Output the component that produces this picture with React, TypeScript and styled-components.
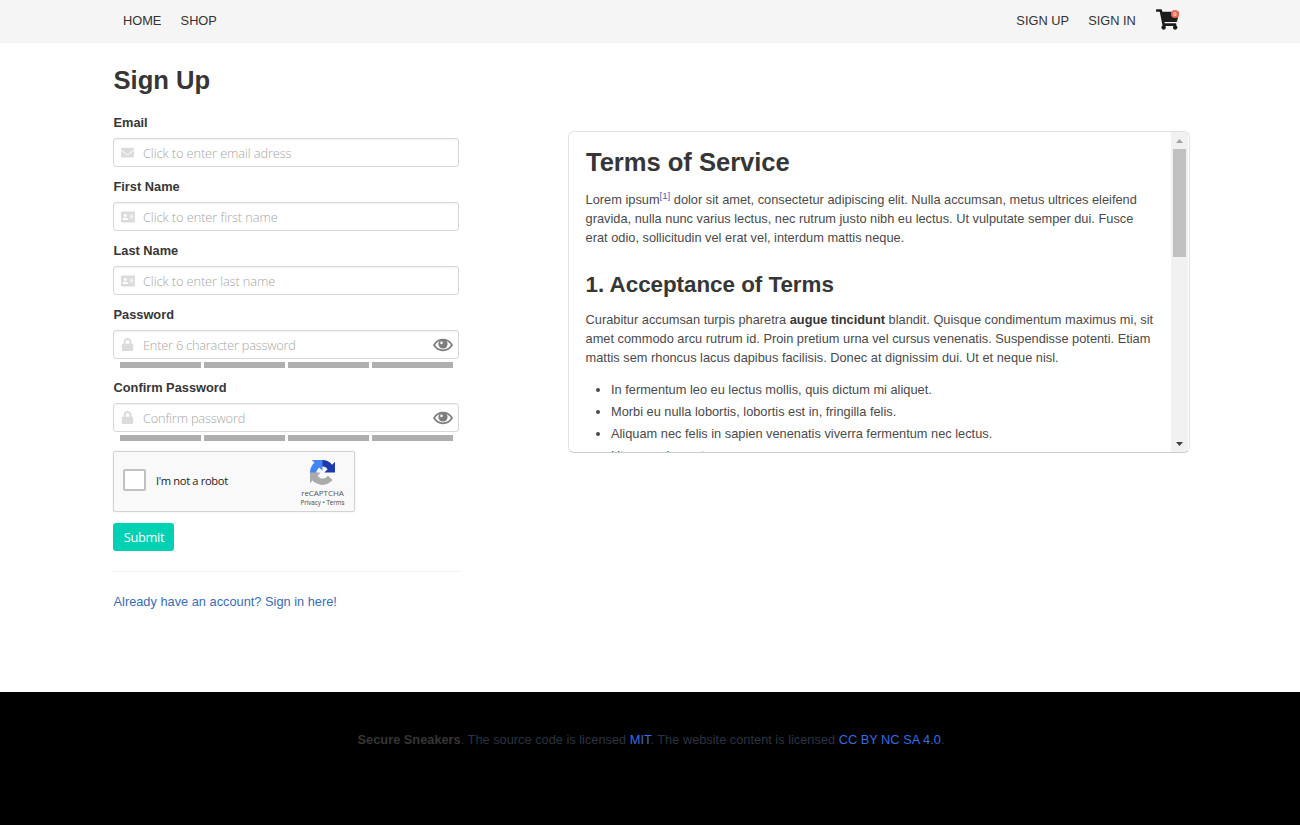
import React from "react";
import styled, { createGlobalStyle } from "styled-components";
import { FaEnvelope, FaAddressCard, FaLock, FaShoppingCart } from "react-icons/fa";

const sans = `"Liberation Sans", Arial, sans-serif`;
const humanist = `"Open Sans", "Noto Sans", sans-serif`;

const GlobalStyle = createGlobalStyle`
  *, *::before, *::after { box-sizing: border-box; }
  body { margin: 0; background: #fff; font: 12.8px/19.2px ${sans}; color: #4a4a4a; }
  h1, h2, p, ul { margin: 0; padding: 0; }
  a { color: #3b6bb5; text-decoration: none; }
`;

const Page = styled.div`
  display: flex;
  flex-direction: column;
  height: 825px;
  overflow: hidden;
`;

const Navbar = styled.nav`
  display: flex;
  justify-content: space-between;
  height: 43px;
  flex: none;
  padding: 0 120px 0 123px;
  background: #f5f5f5;
  border-bottom: 1px solid #f0f0f0;
`;

const NavGroup = styled.div`
  display: flex;
  gap: 19.2px;
  height: 41px;
`;

const NavLink = styled.a`
  color: #333;
  line-height: 42px;
`;

const Cart = styled.a`
  position: relative;
  width: 24px;
  height: 22px;
  margin: 9px 0 0 1px;
  color: #1c1c1c;
  svg { display: block; width: 23px; height: 21px; }
`;

const CartBadge = styled.span`
  position: absolute;
  top: 1px;
  right: 1px;
  width: 8px;
  height: 8px;
  border-radius: 50%;
  background: #ee6a50;
  color: #fbd5cc;
  font-size: 6px;
  font-weight: 700;
  line-height: 8px;
  text-align: center;
`;

const Main = styled.main`
  display: flex;
  flex: none;
  height: 649px;
  padding: 0 110px 0 113px;
  justify-content: space-between;
  align-items: flex-start;
`;

const Form = styled.form`
  width: 346px;
  padding-top: 23px;
`;

const Title = styled.h1`
  font-size: 25.6px;
  line-height: 29px;
  font-weight: 700;
  color: #363636;
  padding-left: 0.5px;
`;

const Fields = styled.div`
  display: flex;
  flex-direction: column;
  padding-top: 18px;
`;

const Field = styled.div<{ $tall?: boolean }>`
  height: ${(p) => (p.$tall ? 73 : 64)}px;
`;

const Label = styled.label`
  display: block;
  height: 25px;
  padding-left: 0.5px;
  font-weight: 700;
  color: #363636;
`;

const InputBox = styled.div`
  display: flex;
  align-items: center;
  height: 29px;
  padding: 0 5px 0 6px;
  border: 1px solid #d8d8d8;
  border-radius: 3px;
  box-shadow: inset 0 1px 2px rgba(10, 10, 10, 0.06);
`;

const InputIcon = styled.span<{ $size: number }>`
  display: flex;
  justify-content: center;
  width: 15px;
  margin-right: 8px;
  color: #dbdbdb;
  svg { width: ${(p) => p.$size}px; height: ${(p) => p.$size}px; flex: none; }
`;

const Placeholder = styled.span<{ $spacing: number }>`
  flex: 1;
  padding-top: 2px;
  font: 300 12.8px/27px ${humanist};
  letter-spacing: ${(p) => p.$spacing}px;
  color: #a6a6a6;
  white-space: nowrap;
`;

const Strength = styled.div`
  display: flex;
  justify-content: space-between;
  width: 333px;
  height: 6px;
  margin: 3px 0 0 7px;
`;

const StrengthBar = styled.span`
  width: 81px;
  height: 6px;
  background: #afafaf;
`;

const Captcha = styled.div`
  display: flex;
  align-items: center;
  width: 242px;
  height: 61px;
  margin-top: 0;
  padding: 0 9px;
  border: 1px solid #d3d3d3;
  border-radius: 2px;
  background: #f9f9f9;
  box-shadow: 0 0 3px rgba(0, 0, 0, 0.08);
`;

const CheckBox = styled.span`
  width: 23px;
  height: 22px;
  margin-top: -3px;
  border: 2px solid #c1c1c1;
  border-radius: 2px;
  background: #fff;
`;

const CaptchaLabel = styled.span`
  flex: 1;
  padding: 0 0 2px 10px;
  font: 400 11.2px/16px ${humanist};
  letter-spacing: -0.37px;
  color: #222;
`;

const CaptchaBrand = styled.div`
  display: flex;
  flex-direction: column;
  align-items: center;
  width: 45px;
  height: 51px;
  svg { width: 25px; height: 25px; margin-top: 4px; flex: none; }
`;

const BrandName = styled.span`
  padding-top: 3px;
  font: 400 8px/9px ${humanist};
  letter-spacing: -0.05px;
  color: #555;
`;

const BrandLinks = styled.span`
  padding-top: 2px;
  font: 400 6.2px/7px ${humanist};
  color: #444;
  white-space: nowrap;
`;

const Submit = styled.button`
  display: block;
  width: 61px;
  height: 28px;
  margin-top: 11px;
  padding: 0;
  border: 0;
  border-radius: 3px;
  background: #00d1b2;
  color: #fff;
  font: 400 12.8px/28px ${humanist};
  letter-spacing: -0.3px;
  text-indent: 1px;
`;

const Divider = styled.hr`
  width: 348px;
  height: 1px;
  margin: 20px 0;
  border: 0;
  background: #f3f3f3;
`;

const SignInLink = styled.a`
  padding-left: 0.5px;
`;

const Terms = styled.section`
  display: flex;
  width: 622px;
  height: 322px;
  margin-top: 88px;
  border: 1px solid #e2e2e2;
  border-bottom-color: #ccc;
  border-radius: 6px;
  overflow: hidden;
`;

const TermsBody = styled.div`
  flex: 1;
  padding: 15px 0 0 16.6px;
  overflow: hidden;
`;

const TermsTitle = styled(Title)`
  line-height: 30px;
  letter-spacing: -0.04px;
  padding: 0 0 0 0.4px;
`;

const TermsHeading = styled.h2`
  margin: 25px 0 0;
  font-size: 22.4px;
  line-height: 26px;
  color: #363636;
  letter-spacing: -0.03px;
`;

const Paragraph = styled.p<{ $gap: number }>`
  margin-top: ${(p) => p.$gap}px;
  line-height: 19px;
`;

const Line = styled.span`
  display: block;
  white-space: nowrap;
  strong { color: #363636; }
`;

const Sup = styled.sup`
  font-size: 9.6px;
  line-height: 0;
  vertical-align: 5px;
`;

const List = styled.ul`
  margin-top: 12px;
  padding-left: 25.4px;
  list-style: disc;
`;

const Item = styled.li`
  height: 22px;
  line-height: 22px;
`;

const Scrollbar = styled.div`
  display: flex;
  flex-direction: column;
  align-items: center;
  width: 17px;
  margin-right: 1px;
  background: #f1f1f1;
`;

const Arrow = styled.svg`
  display: block;
  width: 7px;
  height: 4px;
  margin: 7px 0 6px;
`;

const Thumb = styled.div`
  width: 13px;
  height: 108px;
  margin-bottom: auto;
  background: #c1c1c1;
`;

const Footer = styled.footer`
  flex: 1;
  padding: 38px 0 0 2px;
  background: #000;
  color: #2b3340;
  text-align: center;
  strong { color: #363636; }
  a { color: #3a6be0; }
`;

const Eye = () => (
  <svg width="20" height="14" viewBox="0 0 20 14">
    <path d="M1 7C3.200 3.400 6.400 1.700 10 1.700S16.800 3.400 19 7C16.800 10.600 13.600 12.300 10 12.300S3.200 10.600 1 7Z" fill="none" stroke="#7d7d7d" strokeWidth="1.700" />
    <circle cx="10" cy="6" r="4.600" fill="#7d7d7d" />
    <circle cx="8.500" cy="4.700" r="1.500" fill="#e4e4e4" />
  </svg>
);

const CaptchaLogo = () => (
  <svg viewBox="0 0 64 64">
    <path fill="#1c3aa9" d="M64 31.955l-.033-1.370V4.687l-7.160 7.160C50.948 4.674 42.033.093 32.050.093c-10.400 0-19.622 4.960-25.458 12.640l11.736 11.860a15.550 15.550 0 0 1 4.754-5.334c2.050-1.600 4.952-2.906 8.968-2.906.485 0 .860.057 1.135.163 4.976.393 9.288 3.140 11.828 7.124l-8.307 8.307L64 31.953" />
    <path fill="#4285f4" d="M31.862.094l-1.370.033H4.594l7.160 7.160C4.580 13.147 0 22.060 0 32.046c0 10.400 4.960 19.622 12.640 25.458L24.500 45.768a15.550 15.550 0 0 1-5.334-4.754c-1.600-2.050-2.906-4.952-2.906-8.968 0-.485.057-.860.163-1.135.393-4.976 3.140-9.288 7.124-11.828l8.307 8.307L31.860.095" />
    <path fill="#ababab" d="M.001 32.045l.033 1.370v25.898l7.160-7.160c5.860 7.173 14.774 11.754 24.760 11.754 10.400 0 19.622-4.960 25.458-12.640l-11.736-11.860a15.550 15.550 0 0 1-4.754 5.334c-2.050 1.600-4.952 2.906-8.968 2.906-.485 0-.860-.057-1.135-.163-4.976-.393-9.288-3.140-11.828-7.124l8.307-8.307c-10.522.040-22.400.066-27.295-.005" />
  </svg>
);

const fields = [
  { label: "Email", hint: "Click to enter email adress", spacing: -0.1, icon: <FaEnvelope />, size: 13 },
  { label: "First Name", hint: "Click to enter first name", spacing: -0.08, icon: <FaAddressCard />, size: 14 },
  { label: "Last Name", hint: "Click to enter last name", spacing: -0.1, icon: <FaAddressCard />, size: 14 },
  { label: "Password", hint: "Enter 6 character password", spacing: -0.22, icon: <FaLock />, size: 13, secret: true },
  { label: "Confirm Password", hint: "Confirm password", spacing: -0.18, icon: <FaLock />, size: 13, secret: true },
];

export default function App() {
  return (
    <Page>
      <GlobalStyle />
      <Navbar>
        <NavGroup>
          <NavLink>HOME</NavLink>
          <NavLink>SHOP</NavLink>
        </NavGroup>
        <NavGroup>
          <NavLink>SIGN UP</NavLink>
          <NavLink>SIGN IN</NavLink>
          <Cart>
            <FaShoppingCart />
            <CartBadge>0</CartBadge>
          </Cart>
        </NavGroup>
      </Navbar>
      <Main>
        <Form>
          <Title>Sign Up</Title>
          <Fields>
            {fields.map((f) => (
              <Field key={f.label} $tall={f.secret}>
                <Label>{f.label}</Label>
                <InputBox>
                  <InputIcon $size={f.size}>{f.icon}</InputIcon>
                  <Placeholder $spacing={f.spacing}>{f.hint}</Placeholder>
                  {f.secret && <Eye />}
                </InputBox>
                {f.secret && (
                  <Strength>
                    <StrengthBar />
                    <StrengthBar />
                    <StrengthBar />
                    <StrengthBar />
                  </Strength>
                )}
              </Field>
            ))}
          </Fields>
          <Captcha>
            <CheckBox />
            <CaptchaLabel>I'm not a robot</CaptchaLabel>
            <CaptchaBrand>
              <CaptchaLogo />
              <BrandName>reCAPTCHA</BrandName>
              <BrandLinks>Privacy • Terms</BrandLinks>
            </CaptchaBrand>
          </Captcha>
          <Submit type="button">Submit</Submit>
          <Divider />
          <SignInLink>Already have an account? Sign in here!</SignInLink>
        </Form>
        <Terms>
          <TermsBody>
            <TermsTitle as="h2">Terms of Service</TermsTitle>
            <Paragraph $gap={13}>
              <Line>
                Lorem ipsum<Sup><a>[1]</a></Sup> dolor sit amet, consectetur adipiscing elit. Nulla accumsan, metus ultrices eleifend
              </Line>
              <Line>gravida, nulla nunc varius lectus, nec rutrum justo nibh eu lectus. Ut vulputate semper dui. Fusce</Line>
              <Line>erat odio, sollicitudin vel erat vel, interdum mattis neque.</Line>
            </Paragraph>
            <TermsHeading>1. Acceptance of Terms</TermsHeading>
            <Paragraph $gap={12}>
              <Line>
                Curabitur accumsan turpis pharetra <strong>augue tincidunt</strong> blandit. Quisque condimentum maximus mi, sit
              </Line>
              <Line>amet commodo arcu rutrum id. Proin pretium urna vel cursus venenatis. Suspendisse potenti. Etiam</Line>
              <Line>mattis sem rhoncus lacus dapibus facilisis. Donec at dignissim dui. Ut et neque nisl.</Line>
            </Paragraph>
            <List>
              <Item>In fermentum leo eu lectus mollis, quis dictum mi aliquet.</Item>
              <Item>Morbi eu nulla lobortis, lobortis est in, fringilla felis.</Item>
              <Item>Aliquam nec felis in sapien venenatis viverra fermentum nec lectus.</Item>
              <Item>Ut non enim metus.</Item>
            </List>
          </TermsBody>
          <Scrollbar>
            <Arrow viewBox="0 0 7 4"><path d="M0 4L3.500 0L7 4Z" fill="#a3a3a3" /></Arrow>
            <Thumb />
            <Arrow viewBox="0 0 7 4"><path d="M0 0L3.500 4L7 0Z" fill="#404040" /></Arrow>
          </Scrollbar>
        </Terms>
      </Main>
      <Footer>
        <strong>Secure Sneakers</strong>. The source code is licensed <a>MIT</a>. The website content is licensed <a>CC BY NC SA 4.0</a>.
      </Footer>
    </Page>
  );
}
